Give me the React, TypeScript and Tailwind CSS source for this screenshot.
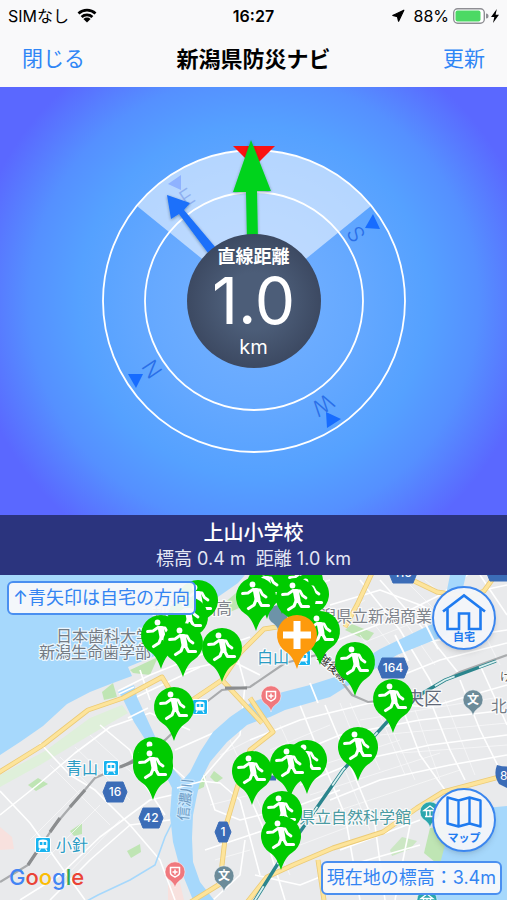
import { Navigation } from "lucide-react"

type Point = { x: number; y: number }

const FONT = "font-[family-name:Inter,'Noto_Sans_CJK_JP',sans-serif]"

const SHELTERS: Point[] = [
    { x: 282, y: 5 },
    { x: 267, y: 10 },
    { x: 303, y: 6 },
    { x: 256, y: 22 },
    { x: 309, y: 19 },
    { x: 296, y: 23 },
    { x: 320, y: 56 },
    { x: 198, y: 25 },
    { x: 188, y: 42 },
    { x: 161, y: 60 },
    { x: 183, y: 68 },
    { x: 222, y: 73 },
    { x: 355, y: 87 },
    { x: 393, y: 124 },
    { x: 174, y: 132 },
    { x: 358, y: 172 },
    { x: 153, y: 182 },
    { x: 153, y: 191 },
    { x: 252, y: 196 },
    { x: 307, y: 185 },
    { x: 290, y: 189 },
    { x: 282, y: 236 },
    { x: 281, y: 261 },
]

const ROUTES = [
    { x: 115, y: 217, label: "16", w: 12 },
    { x: 151, y: 243, label: "42", w: 12 },
    { x: 223, y: 257, label: "1", w: 8 },
    { x: 393, y: 93, label: "164", w: 15 },
    { x: 403, y: -2, label: "116", w: 14 },
    { x: 500, y: -4, label: "113", w: 14 },
]

const STATIONS: Point[] = [
    { x: 111, y: 193 },
    { x: 43, y: 270 },
    { x: 200, y: 132 },
    { x: 303, y: 83 },
]

const YELLOW_ROADS = [
    "M-2 198L43 170L88 135L123 123L162 102L173 120",
    "M185 130L222 105L262 148",
    "M222 105L240 78L264 54L290 50",
    "M186 330L220 309L222 290L227 247L237 213L250 175L273 157L250 123",
    "M245 330L267 302L293 290L333 273L383 257L417 233L443 217L507 200",
    "M372 -2L357 30L345 52",
    "M392 -2L412 5L437 17L470 22L484 16L497 -2",
    "M318 285L324 325",
]

const WHITE_ROADS = [
    "M118 116L150 100L200 80L250 62",
    "M130 125L200 92M140 95L150 125",
    "M0 216L30 248L60 290L85 325",
    "M40 168L70 200L95 215L130 250L160 285L175 325",
    "M0 240L40 208L75 178L110 152L150 138L190 155",
    "M20 325L60 300L100 262L150 225L172 220",
    "M50 325L90 285L130 250L170 245",
    "M100 150L130 175L145 210L165 240",
    "M150 155L170 190L195 212L240 160L245 110",
    "M175 175L220 155L250 140",
    "M190 205L220 208L240 225L260 300",
    "M200 190L215 235L240 245L300 230L340 215",
    "M205 275L250 260L280 250L330 240",
    "M240 200L262 250L285 325",
    "M250 165L300 145L370 128L430 132L507 110",
    "M280 185L340 160L420 145L507 135",
    "M300 210L360 185L430 170L507 160",
    "M330 225L380 205L450 190L507 180",
    "M300 130L320 180L345 240L360 325",
    "M325 130L350 190L375 250L385 325",
    "M405 140L420 180L445 215",
    "M430 125L450 175L465 205",
    "M460 105L480 155L500 195",
    "M480 90L507 150",
    "M325 70L390 45L440 20L470 -2",
    "M330 30L380 15L420 30L450 45",
    "M360 5L400 55L430 105L440 130",
    "M380 5L420 50L460 100",
    "M345 90L400 70L440 65L507 55",
    "M390 105L440 85L507 68",
    "M185 95L230 85L260 100",
    "M245 30L330 5M230 55L245 110",
    "M255 300L300 310L350 290L420 270",
    "M213 325L240 300L245 265",
    "M340 275L420 245M395 325L410 250",
    "M480 0L507 40M460 20L507 10",
]

const LANES = [
    "M50 190L110 250M60 182L120 240M75 172L130 225M90 160L140 205M30 265L80 215M45 285L100 230M62 305L120 245",
    "M280 150L310 215M340 128L365 190M350 128L380 195M375 128L405 200M390 150L415 205M415 135L440 205M445 125L475 200",
    "M270 175L330 150M290 200L400 165M310 220L440 178M340 235L460 195M360 145L500 122M380 160L507 148M400 178L507 170",
    "M220 180L250 165M210 230L250 220M215 285L250 275M230 165L262 235M300 270L380 240M270 255L290 300M345 195L370 255",
    "M360 60L390 100M375 50L410 95M400 40L435 90M345 75L420 45M410 10L440 40M425 5L460 35M335 45L365 25M480 50L500 90",
]

const SIGN_LABELS = [
    { x: 232, y: 39, text: "新潟明訓高", fill: "#7f848c", size: 16, anchor: "end" as const },
    { x: 56, y: 67, text: "日本歯科大学", fill: "#747b84", size: 16, anchor: "start" as const },
    { x: 39, y: 83, text: "新潟生命歯学部", fill: "#747b84", size: 16, anchor: "start" as const },
    { x: 432, y: 47, text: "潟県立新潟商業", fill: "#7f848c", size: 16, anchor: "end" as const },
    { x: 257, y: 88, text: "白山", fill: "#2b9cc4", size: 16, anchor: "start" as const },
    { x: 66, y: 199, text: "青山", fill: "#2b9cc4", size: 16, anchor: "start" as const },
    { x: 56, y: 276, text: "小針", fill: "#2b9cc4", size: 16, anchor: "start" as const },
    { x: 442, y: 130, text: "中央区", fill: "#626978", size: 18, anchor: "end" as const },
    { x: 491, y: 137, text: "北", fill: "#747b84", size: 16, anchor: "start" as const },
    { x: 500, y: 106, text: "け", fill: "#555", size: 11, anchor: "start" as const },
    { x: 411, y: 248, text: "県立自然科学館", fill: "#4c9ba3", size: 16, anchor: "end" as const },
]

function StatusBar() {
    return (
        <div className="grid h-[31px] grid-cols-3 items-center px-2 text-base">
            <div className="flex items-center gap-2">
                <span>SIMなし</span>
                <svg viewBox="0 0 20 15" className="h-[15px] w-5" aria-hidden="true">
                    <path d="M1.5 5.5a12.5 12.5 0 0 1 17 0M4.6 9a8 8 0 0 1 10.8 0" fill="none" stroke="#000" strokeWidth="2.8" />
                    <path d="M10 14.5L6.4 11a5.3 5.3 0 0 1 7.2 0z" />
                </svg>
            </div>
            <time className="text-center font-semibold">16:27</time>
            <div className="flex items-center justify-end">
                <Navigation className="mr-2 size-[14px]" fill="#000" strokeWidth={2} />
                <span>88%</span>
                <svg viewBox="0 0 36 16" className="ml-1 h-4 w-9" aria-hidden="true">
                    <rect x="0.7" y="0.7" width="30.6" height="14.6" rx="4" fill="#fff" stroke="#8e8e93" strokeWidth="1.4" />
                    <rect x="2.5" y="2.5" width="25" height="11" rx="2" fill="#4cd964" />
                    <path d="M33 5.5a2.5 2.5 0 0 1 0 5z" fill="#8e8e93" />
                </svg>
                <svg viewBox="0 0 8 14" className="ml-0.5 h-[14px] w-2" aria-hidden="true">
                    <path d="M5.8 0L0 8h3.3L2 14l6-8.3H4.6z" />
                </svg>
            </div>
        </div>
    )
}

function CompassDial() {
    return (
        <svg viewBox="-160 -170 320 340" className="absolute inset-0 h-full w-full" aria-hidden="true">
            <defs>
                <filter id="arrow-shadow" x="-30%" y="-30%" width="160%" height="160%">
                    <feDropShadow dx="0" dy="1" stdDeviation="1.5" floodColor="#123" floodOpacity="0.4" />
                </filter>
            </defs>
            <path d="M0 0L-117 -95A151 151 0 0 1 117 -95Z" fill="#fff" fillOpacity="0.55" />
            <g fill="none" stroke="#fff" strokeWidth="1.8">
                <circle r="151" />
                <circle r="109" />
            </g>

            {/* Cardinal points */}
            <g fill="#176cff">
                <path d="M-126 73L-111 73L-118 87Z" />
                <path d="M119 -87L111 -73L126 -72Z" />
                <path d="M72 111L87 118L73 127Z" />
                <path d="M-86 -117L-73 -126L-73 -111Z" fill="#8fb2ff" />
            </g>
            <g fill="#2a6fe8" fontSize="22" fontWeight="300" textAnchor="middle">
                <text transform="translate(-102 68) rotate(236)" y="8">N</text>
                <text transform="translate(102 -67) rotate(57)" y="8">S</text>
                <text transform="translate(69 104) rotate(146)" y="8">W</text>
                <text transform="translate(-67 -104) rotate(-33)" y="8" fill="#8fb0f0">E</text>
            </g>

            <path d="M-21 -155L21 -155L0 -134Z" fill="#fb1212" />
            <path d="M-3 -161L17 -110L3 -110L4 -60L-7 -60L-8 -109L-21 -109Z" fill="#06d31f" filter="url(#arrow-shadow)" />
            <path d="M-87 -106L-64 -98L-70 -91L-38 -53L-46 -48L-75 -87L-83 -82Z" fill="#1b70fa" filter="url(#arrow-shadow)" />
        </svg>
    )
}

function ShelterPin({ x, y }: Point) {
    return (
        <g transform={`translate(${x} ${y})`}>
            <path d="M0 34C-3 25 -6 20 -11 16.7A20 20 0 1 1 11 16.7C6 20 3 25 0 34Z" fill="#00cb00" />
            <circle cx="-3.5" cy="-12.5" r="2.9" fill="#fff" />
            <g fill="none" stroke="#fff" strokeLinejoin="round" strokeLinecap="round">
                <path d="M-13.5 -3.5L-8 -4L-3 -7.5L4 -7L6.5 -2.5L10 0" strokeWidth="2.8" />
                <path d="M0 -6L1.5 2" strokeWidth="6" />
                <path d="M0 3L-2 8L-7.5 11.5M2.5 3L5.5 8.5L12.5 8.5" strokeWidth="3.2" />
            </g>
        </g>
    )
}

function PlacePin({ x, y, color, children }: Point & { color: string; children?: React.ReactNode }) {
    return (
        <g transform={`translate(${x} ${y})`}>
            <path d="M0 16C-1 11 -4 9 -7 7A10 10 0 1 1 7 7C4 9 1 11 0 16Z" fill={color} stroke="#fff" strokeOpacity="0.5" />
            {children}
        </g>
    )
}

function Station({ x, y }: Point) {
    return (
        <g transform={`translate(${x} ${y})`}>
            <rect x="-7.5" y="-7.5" width="15" height="15" rx="1.5" fill="#18b4f0" stroke="#fff" />
            <path d="M-4.5 -3.5Q-4.5 -5.5 0 -5.5T4.5 -3.5V2Q4.5 3.5 3 3.5H-3Q-4.5 3.5 -4.5 2Z" fill="#fff" />
            <path d="M-3.2 -3H-0.6V0H-3.2ZM0.6 -3H3.2V0H0.6Z" fill="#18b4f0" />
            <path d="M-2.5 3.5L-4 6M2.5 3.5L4 6" stroke="#fff" strokeWidth="1.2" />
        </g>
    )
}

function AreaMap() {
    return (
        <svg viewBox="0 0 507 325" className="block w-full" role="img" aria-label="新潟市の地図">
            <rect width="507" height="325" fill="#e9eaec" />

            {/* Parks and beach */}
            <path d="M0 200L45 176L90 143L122 130L128 138L90 160L40 190L0 212Z" fill="#dff0da" />
            <g fill="#bfe5b4">
                <path d="M102 117L113 108L117 122L104 125Z" />
                <path d="M130 95L158 82L150 100L133 98Z" />
                <path d="M222 30L243 12L250 28L228 38Z" />
                <path d="M28 210L38 203L48 209L36 216Z" />
                <path d="M70 256L82 248L82 259L74 261Z" />
                <path d="M127 276L140 269L141 277L131 283Z" />
                <path d="M192 204L206 199L204 212L193 217Z" />
                <path d="M210 202L214 196L223 203L216 208Z" />
                <path d="M345 55L352 49L374 58L368 66Z" />
                <path d="M430 253L424 278L441 292L452 250Z" />
                <path d="M390 275L402 262L417 266L410 274L392 281Z" fillOpacity="0.7" />
            </g>
            <path d="M0 252L12 262L14 274L0 275ZM168 310L180 308L184 325L168 325Z" fill="#f8e1de" />

            <g fill="none" stroke="#f7f8f9" strokeWidth="0.8">
                {LANES.map((d) => (
                    <path key={d} d={d} />
                ))}
            </g>
            <g fill="none" stroke="#fff" strokeWidth="1.6" strokeLinejoin="round">
                {WHITE_ROADS.map((d) => (
                    <path key={d} d={d} />
                ))}
            </g>

            {/* Sea, rivers and lagoon */}
            <g fill="#a6d8fc">
                <path d="M0 0H245L238 8L215 24L200 56L157 80L128 92L132 101L113 108L90 117L67 129L43 151L20 167L0 180Z" />
                <path d="M118 117L134 110L137 122L153 157L167 187L183 205L190 197L200 177L213 157L230 142L252 127L283 117L310 110L335 102L380 74L430 50L445 25L450 0H466L460 25L447 60L397 80L365 100L330 122L285 135L270 142L260 145L247 150L227 167L210 187L200 207L197 220L193 240L192 263L193 287L200 307L214 325H193L180 293L173 267L170 240L172 213L155 180L134 147L122 122Z" />
                <path d="M437 300L445 270L450 245L475 234L507 231V325H420L430 310Z" />
            </g>
            <path d="M172 248L165 262L155 290L130 305L98 320L85 327" fill="none" stroke="#a6d8fc" strokeWidth="1.6" />
            <g stroke="#fff" strokeWidth="1.8">
                <path d="M119 119L134 112M128 143L148 133M177 213L203 206M395 60L408 86M425 48L438 74M310 108L318 128" />
            </g>

            <g fill="none" strokeLinejoin="round">
                {YELLOW_ROADS.map((d) => (
                    <path key={d} d={d} stroke="#eccb76" strokeWidth="5" />
                ))}
                {YELLOW_ROADS.map((d) => (
                    <path key={d} d={d} stroke="#fde49b" strokeWidth="3.4" />
                ))}
            </g>

            {/* Railways */}
            <g fill="none">
                <path d="M0 307L28 290L55 250L95 203L125 190L165 165L200 132L222 115L250 112L285 88L317 80L335 98L352 120L368 127L400 124L423 118L460 97L507 80" stroke="#a9abad" strokeWidth="2.2" />
                <path d="M28 290L40 272M50 257L60 243M70 232L85 215M120 192L135 186M225 113L247 113" stroke="#8b8d8f" strokeWidth="3.2" />
                <path d="M252 330L277 290L300 257L343 195L387 147L423 118L445 105L496 86" stroke="#2b858d" strokeWidth="3.4" />
                <path d="M252 330L277 290L300 257L343 195L387 147L423 118L445 105L496 86" stroke="#d8f0f0" strokeWidth="1.8" strokeDasharray="22 26" />
            </g>

            <g stroke="#fff" strokeWidth="2.4" strokeOpacity="0.8" strokeLinejoin="round" paintOrder="stroke">
                {SIGN_LABELS.map((l) => (
                    <text key={l.text} x={l.x} y={l.y} fontSize={l.size} fill={l.fill} textAnchor={l.anchor}>
                        {l.text}
                    </text>
                ))}
                <text transform="translate(188 246) rotate(-84)" fontSize="14" fill="#6f9cc4" strokeOpacity="0.4">信濃川</text>
                <text transform="translate(317 84) rotate(42)" fontSize="12" fill="#333">越後線</text>
            </g>

            {STATIONS.map((s) => (
                <Station key={s.x} {...s} />
            ))}

            {ROUTES.map((r) => (
                <g key={r.label} transform={`translate(${r.x} ${r.y})`}>
                    <path
                        d={`M${-r.w} 0L${4 - r.w} -10H${r.w - 4}L${r.w} 0L${r.w - 4} 10H${4 - r.w}Z`}
                        fill="#3b6cb7"
                        stroke="#3b6cb7"
                        strokeLinejoin="round"
                    />
                    <text y="4" fontSize="12" fontWeight="500" fill="#fff" textAnchor="middle">{r.label}</text>
                </g>
            ))}
            <path d="M497 190Q507 193 517 190Q521 200 514 209L507 213L499 209Q493 200 497 190Z" fill="#3b6cb7" />
            <text x="500" y="205" fontSize="12" fill="#fff">8</text>
            <path d="M262 203H276" stroke="#3b6cb7" strokeWidth="5" />

            <PlacePin x={278} y={40} color="#6d93a8" />
            <PlacePin x={224} y={301} color="#6c8b99">
                <text y="4" fontSize="12" fontWeight="700" fill="#fff" textAnchor="middle">文</text>
            </PlacePin>
            <PlacePin x={473} y={125} color="#6c8b99">
                <text y="4" fontSize="12" fontWeight="700" fill="#fff" textAnchor="middle">文</text>
            </PlacePin>
            {[{ x: 175, y: 297 }, { x: 271, y: 121 }].map((p) => (
                <PlacePin key={p.x} {...p} color="#f0787d">
                    <path d="M-4.5 -4.5H4.5V1Q4.5 3 0 5Q-4.5 3 -4.5 1ZM0 -2.5V2.5M-2.5 0H2.5" fill="none" stroke="#fff" strokeWidth="1.5" />
                </PlacePin>
            ))}
            {[{ x: 430, y: 237 }, { x: 427, y: 325 }].map((p) => (
                <PlacePin key={p.x} {...p} color="#2aa6ad">
                    <path d="M-6 -1.5L0 -6L6 -1.5ZM-5 4.5H5M-3.5 -1V4M0 -1V4M3.5 -1V4" fill="none" stroke="#fff" strokeWidth="1.3" />
                </PlacePin>
            ))}

            {SHELTERS.map((p) => (
                <ShelterPin key={`${p.x}-${p.y}`} {...p} />
            ))}
            <g transform="translate(297 60)">
                <path d="M0 34C-3 25 -6 20 -11 16.7A20 20 0 1 1 11 16.7C6 20 3 25 0 34Z" fill="#fd9a0d" />
                <path d="M-3.5 -14H3.5V-3.5H14V3.5H3.5V14H-3.5V3.5H-14V-3.5H-3.5Z" fill="#fff" />
            </g>

            <text x="9" y="310" fontSize="22" fontWeight="500">
                <tspan fill="#4285f4">G</tspan>
                <tspan fill="#ea4335">o</tspan>
                <tspan fill="#fbbc05">o</tspan>
                <tspan fill="#4285f4">g</tspan>
                <tspan fill="#34a853">l</tspan>
                <tspan fill="#ea4335">e</tspan>
            </text>
        </svg>
    )
}

const ROUND_BUTTON =
    "absolute right-[11px] flex size-16 flex-col items-center justify-center rounded-full border-2 border-[#3b86ee] bg-[#f3f6fa]/95 text-[11px] leading-3 font-bold text-[#1f7bf0] shadow-md"

const MAP_NOTE = "absolute rounded-md border-2 border-[#4a8ff0] bg-[#f8f9fb]/95 px-1 text-lg leading-[30px] whitespace-nowrap text-[#3384f2]"

export default function App() {
    return (
        <div className={`${FONT} w-full bg-[#f9f9fa] text-black`}>
            <header>
                <StatusBar />
                <nav className="grid h-14 grid-cols-[1fr_auto_1fr] items-center px-[22px] text-[21px]">
                    <button type="button" className="justify-self-start text-[#2f86f6]">閉じる</button>
                    <h1 className="text-[22px] font-bold">新潟県防災ナビ</h1>
                    <button type="button" className="justify-self-end text-[#2f86f6]">更新</button>
                </nav>
            </header>

            <main>
                <section className="bg-[radial-gradient(circle,#76b2ff_0px,#66a9ff_100px,#55a1ff_175px,#5590ff_225px,#5a68ff_285px)] py-11">
                    <div className="relative mx-auto flex h-[340px] w-80 items-center justify-center">
                        <CompassDial />
                        <div className="relative flex size-[134px] flex-col items-center justify-center rounded-full bg-[radial-gradient(circle,#4c5d78_30%,#313b52_100%)] pt-1 text-white">
                            <p className="text-lg leading-5 font-bold">直線距離</p>
                            <p className="text-[64px] leading-[68px]">1.0</p>
                            <p className="text-xl leading-6">km</p>
                        </div>
                    </div>
                </section>

                <section className="bg-[#2b347e] py-1 text-center text-white">
                    <h2 className="text-xl leading-7 font-medium">上山小学校</h2>
                    <p className="text-lg leading-6 whitespace-pre text-[#e4e7f5]">標高 0.4 m  距離 1.0 km</p>
                </section>

                <section className="relative overflow-hidden">
                    <AreaMap />
                    <p className={`${MAP_NOTE} top-[6px] left-[7px]`}>↑青矢印は自宅の方向</p>

                    <button type="button" className={`${ROUND_BUTTON} top-[11px]`}>
                        <svg viewBox="0 0 44 38" className="h-[38px] w-11" fill="none" stroke="#1f7bf0" strokeWidth="2.6" aria-hidden="true">
                            <path d="M1 18.5L22 2.5L43 18.5" />
                            <path d="M5.5 16V36H17V20.5H27V36H38.5V16" />
                        </svg>
                        自宅
                    </button>
                    <button type="button" className={`${ROUND_BUTTON} bottom-12`}>
                        <svg viewBox="0 0 36 32" className="mb-1 h-8 w-9" fill="none" stroke="#1f7bf0" strokeWidth="2.4" strokeLinejoin="round" aria-hidden="true">
                            <path d="M1.5 1.5L12.5 4.5L23.5 1.5L34.5 4.5V30.5L23.5 27.5L12.5 30.5L1.5 27.5ZM12.5 4.5V30.5M23.5 1.5V27.5" />
                        </svg>
                        マップ
                    </button>

                    <p className={`${MAP_NOTE} right-[5px] bottom-[5px]`}>現在地の標高：3.4m</p>
                </section>
            </main>
        </div>
    )
}
